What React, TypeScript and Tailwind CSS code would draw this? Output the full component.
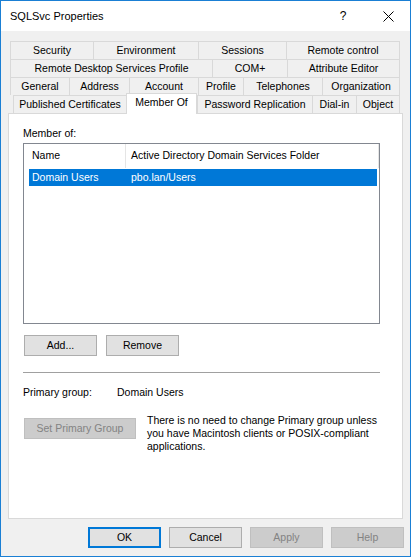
const tabRows: { label: string; w: number; selected?: boolean }[][] = [
  [
    { label: "Security", w: 83 },
    { label: "Environment", w: 105 },
    { label: "Sessions", w: 88 },
    { label: "Remote control", w: 114 },
  ],
  [
    { label: "Remote Desktop Services Profile", w: 202 },
    { label: "COM+", w: 75 },
    { label: "Attribute Editor", w: 113 },
  ],
  [
    { label: "General", w: 59 },
    { label: "Address", w: 60 },
    { label: "Account", w: 69 },
    { label: "Profile", w: 45 },
    { label: "Telephones", w: 79 },
    { label: "Organization", w: 78 },
  ],
  [
    { label: "Published Certificates", w: 113 },
    { label: "Member Of", w: 71, selected: true },
    { label: "Password Replication", w: 115 },
    { label: "Dial-in", w: 44 },
    { label: "Object", w: 44 },
  ],
];

const tabWidth: Record<number, string> = {
  83: "w-[83px]",
  105: "w-[105px]",
  88: "w-[88px]",
  114: "w-[114px]",
  202: "w-[202px]",
  75: "w-[75px]",
  113: "w-[113px]",
  59: "w-[59px]",
  60: "w-[60px]",
  69: "w-[69px]",
  45: "w-[45px]",
  79: "w-[79px]",
  78: "w-[78px]",
  71: "w-[71px]",
  115: "w-[115px]",
  44: "w-[44px]",
};

const Button = ({
  label,
  disabled,
  isDefault,
  width = "w-[73px]",
}: {
  label: string;
  disabled?: boolean;
  isDefault?: boolean;
  width?: string;
}) => {
  let cls = "bg-[#e1e1e1] border border-[#adadad] text-black";
  if (disabled) cls = "bg-[#cccccc] border border-[#bfbfbf] text-[#838383]";
  if (isDefault) cls = "bg-[#e1e1e1] border-2 border-[#0078d7] text-black";
  return (
    <div
      className={`${width} h-[21px] flex items-center justify-center shrink-0 leading-none ${cls}`}
    >
      {label}
    </div>
  );
};

export default function App() {
  return (
    <div className="w-[413px] h-[558px] bg-white">
      <div
        className="w-[411px] h-[557px] border border-[#1a7fd4] bg-[#f0f0f0] flex flex-col text-[10.5px] text-black"
        style={{ fontFamily: '"Liberation Sans", Arial, sans-serif' }}
      >
        {/* title bar */}
        <div className="h-[30px] bg-white flex items-center shrink-0">
          <div className="pl-[9px] text-[11px]">SQLSvc Properties</div>
          <div className="ml-auto w-[30px] text-center text-[12px] leading-none">?</div>
          <div className="ml-[8px] w-[44px] flex items-center justify-center">
            <svg width="11" height="11" viewBox="0 0 11 11">
              <path d="M0.5 0.5 L10.5 10.5 M10.5 0.5 L0.5 10.5" stroke="#000" strokeWidth="1" />
            </svg>
          </div>
        </div>

        <div className="pl-[7px]">
          {/* tabs */}
          <div className="mt-[10px] ml-[2px] w-[390px]">
            {tabRows.map((row, ri) => (
              <div
                key={ri}
                className={`flex items-start h-[18px] ${ri === 3 ? "pl-[3px]" : ""}`}
              >
                {row.map((t, ti) =>
                  t.selected ? (
                    <div
                      key={t.label}
                      className={`${tabWidth[t.w]} relative z-10 -mt-[2px] h-[21px] bg-white border-t border-l border-r border-[#d9d9d9] flex items-center justify-center pb-[3px] shrink-0`}
                    >
                      {t.label}
                    </div>
                  ) : (
                    <div
                      key={t.label}
                      className={`${tabWidth[t.w]} h-[18px] border-t border-l border-[#d9d9d9] ${
                        ti === row.length - 1 ? "border-r" : ""
                      } flex items-center justify-center shrink-0`}
                    >
                      {t.label}
                    </div>
                  )
                )}
              </div>
            ))}
          </div>

          {/* panel */}
          <div className="w-[395px] h-[406px] bg-white border border-[#d9d9d9] pl-[14px] pt-[12px]">
            <div className="leading-[14px]">Member of:</div>

            <div className="mt-[3px] w-[357px] h-[181px] border border-[#828790] bg-white">
              <div className="h-[24px] flex items-center">
                <div className="w-[101px] pl-[8px]">Name</div>
                <div className="w-px h-[24px] bg-[#e5e5e5]" />
                <div className="pl-[5px] w-[252px]">Active Directory Domain Services Folder</div>
                <div className="w-px h-[24px] bg-[#e5e5e5]" />
              </div>
              <div className="mt-px ml-[5px] mr-[2px] h-[17px] bg-[#0078d7] text-white flex items-center">
                <div className="w-[102px] pl-[3px]">Domain Users</div>
                <div>pbo.lan/Users</div>
              </div>
            </div>

            <div className="mt-[11px] flex gap-[9px] pl-px">
              <Button label="Add..." />
              <Button label="Remove" />
            </div>

            <div className="mt-[16px] w-[357px] h-px bg-[#a0a0a0]" />

            <div className="mt-[12px] flex leading-[14px]">
              <div className="w-[94px]">Primary group:</div>
              <div>Domain Users</div>
            </div>

            <div className="mt-[15px] flex items-start">
              <div className="mt-[4px] pl-px">
                <Button label="Set Primary Group" disabled width="w-[112px]" />
              </div>
              <div className="ml-[11px] w-[236px] leading-[13px]">
                There is no need to change Primary group unless you have Macintosh clients or
                POSIX-compliant applications.
              </div>
            </div>
          </div>

          {/* dialog buttons */}
          <div className="mt-[8px] flex justify-end gap-[8px] pr-[6px]">
            <Button label="OK" isDefault />
            <Button label="Cancel" />
            <Button label="Apply" disabled />
            <Button label="Help" disabled />
          </div>
        </div>
      </div>
    </div>
  );
}
